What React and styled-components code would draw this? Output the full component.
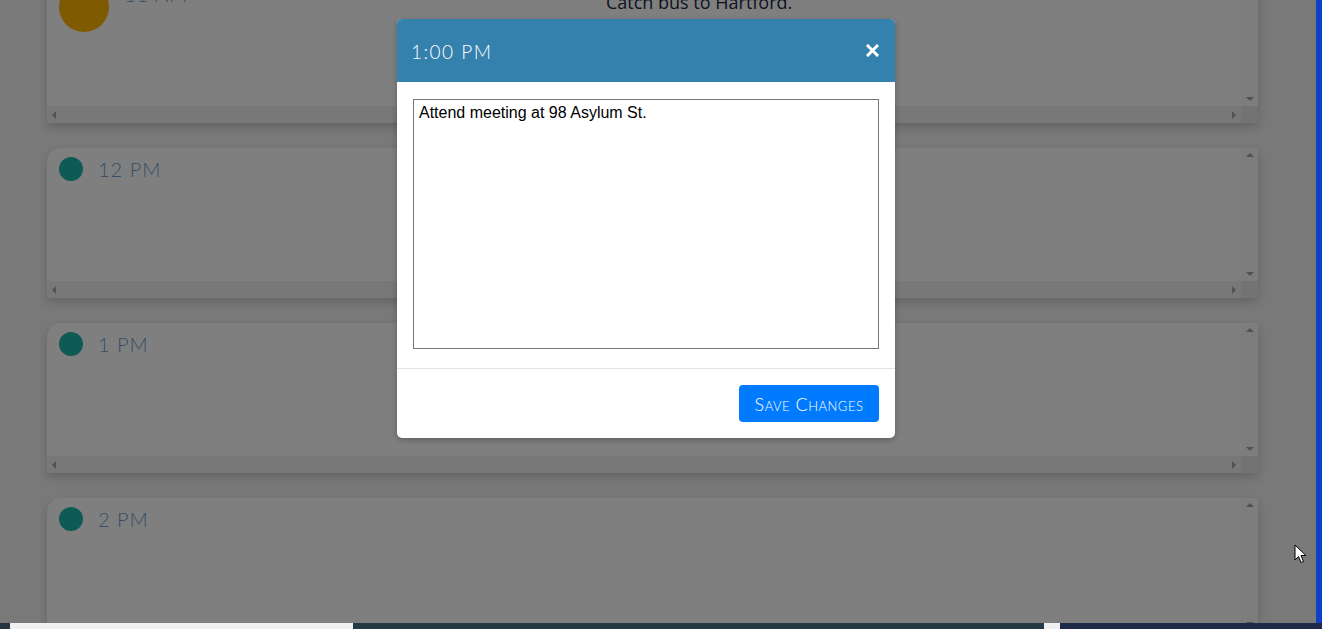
import React from 'react';
import styled, { createGlobalStyle } from 'styled-components';

const GlobalStyle = createGlobalStyle`
  html, body {
    margin: 0;
    padding: 0;
    overflow: hidden;
  }
  #root {
    width: 1322px;
    height: 629px;
  }
`;

const Screen = styled.div`
  width: 1322px;
  height: 629px;
  display: flex;
  flex-direction: column;
  overflow: hidden;
`;

const Row = styled.div`
  flex: 1;
  display: flex;
  min-height: 0;
`;

const Viewport = styled.div`
  flex: 1;
  position: relative;
  overflow: hidden;
  background: #f2f2f2;
`;

const BlueEdge = styled.div`
  width: 6px;
  background: #1040c8;
`;

const Taskbar = styled.div`
  height: 6px;
  display: flex;
  background: #26323f;
`;

const TaskPiece = styled.div`
  width: ${p => p.w}px;
  background: ${p => p.bg};
  flex: ${p => (p.grow ? 1 : 'none')};
`;

const List = styled.div`
  display: flex;
  flex-direction: column;
  gap: 25px;
  margin-top: -27px;
  padding-left: 47px;
`;

const Card = styled.div`
  width: 1211px;
  height: 150px;
  display: grid;
  grid-template-columns: 1fr 17px;
  grid-template-rows: 1fr 17px;
  background: #fff;
  border-top-left-radius: 14px;
  box-shadow: 0 4px 10px rgba(0, 0, 0, 0.18);
  font-family: Lato, "Open Sans", sans-serif;
`;

const Content = styled.div`
  display: flex;
  align-items: flex-start;
  padding: 9px 12px;
  gap: 15px;
`;

const Dot = styled.div`
  width: ${p => p.size}px;
  height: ${p => p.size}px;
  border-radius: 50%;
  background: ${p => p.color};
  flex: none;
`;

const Hour = styled.div`
  color: #6f9dc8;
  font-size: 20px;
  font-weight: 300;
  letter-spacing: 1px;
  line-height: 24px;
`;

const Note = styled.div`
  flex: 1;
  text-align: center;
  margin-top: ${p => p.top}px;
  color: #1c2a44;
  font-family: "Open Sans", sans-serif;
  font-size: 18px;
  font-weight: 400;
  padding-right: 34px;
`;

const VBar = styled.div`
  background: #fafafa;
  display: flex;
  flex-direction: column;
  justify-content: space-between;
  align-items: center;
  padding: 5px 0;
`;

const HBar = styled.div`
  background: #f1f1f1;
  display: flex;
  justify-content: space-between;
  align-items: center;
  padding: 0 5px;
`;

const Corner = styled.div`
  background: #e6e6e6;
`;

const Arrow = styled.span`
  width: 0;
  height: 0;
  border: 4px solid transparent;
  ${p => p.dir === 'up' && 'border-bottom-color: #a3a3a3; border-top-width: 0;'}
  ${p => p.dir === 'down' && 'border-top-color: #a3a3a3; border-bottom-width: 0;'}
  ${p => p.dir === 'left' && 'border-right-color: #a3a3a3; border-left-width: 0;'}
  ${p => p.dir === 'right' && 'border-left-color: #a3a3a3; border-right-width: 0;'}
`;

const Backdrop = styled.div`
  position: absolute;
  inset: 0;
  background: rgba(0, 0, 0, 0.5);
`;

const Modal = styled.div`
  position: absolute;
  top: 19px;
  left: 397px;
  width: 498px;
  background: #fff;
  border-radius: 5px;
  overflow: hidden;
  box-shadow: 0 2px 6px rgba(0, 0, 0, 0.25);
  font-family: Lato, "Open Sans", sans-serif;
`;

const Header = styled.div`
  height: 63px;
  background: #3581ae;
  display: flex;
  align-items: center;
  justify-content: space-between;
  padding: 0 16px 0 14px;
  color: #fff;
`;

const Title = styled.div`
  font-size: 19px;
  font-weight: 300;
  letter-spacing: 1.5px;
  padding-top: 2px;
`;

const Close = styled.button`
  border: none;
  background: none;
  color: #fff;
  padding: 0;
  display: flex;
  cursor: pointer;
`;

const Body = styled.div`
  padding: 17px 16px 19px;
  border-bottom: 1px solid #e4e4e4;
`;

const Area = styled.textarea`
  display: block;
  box-sizing: border-box;
  width: 466px;
  height: 250px;
  border: 1px solid #767676;
  padding: 4px 5px;
  resize: none;
  font-family: "Liberation Sans", Arial, sans-serif;
  font-size: 16px;
  color: #000;
  outline: none;
`;

const Footer = styled.div`
  display: flex;
  justify-content: flex-end;
  padding: 16px;
`;

const SaveButton = styled.button`
  width: 140px;
  height: 37px;
  border: none;
  border-radius: 4px;
  background: #007bff;
  color: #fff;
  font-family: Lato, "Open Sans", sans-serif;
  font-size: 18px;
  font-weight: 300;
  font-variant: small-caps;
  letter-spacing: 0.5px;
  cursor: pointer;
`;

const Pointer = styled.svg`
  position: absolute;
  left: 1294px;
  top: 544px;
`;

const slots = [
  { hour: '11 AM', color: '#ffb400', size: 50, note: 'Catch bus to Hartford.' },
  { hour: '12 PM', color: '#1cb5aa', size: 24 },
  { hour: '1 PM', color: '#1cb5aa', size: 24 },
  { hour: '2 PM', color: '#1cb5aa', size: 24 },
];

function Slot({ slot }) {
  return (
    <Card>
      <Content>
        <Dot size={slot.size} color={slot.color} />
        <Hour>{slot.hour}</Hour>
        {slot.note && <Note top={8}>{slot.note}</Note>}
      </Content>
      <VBar>
        <Arrow dir="up" />
        <Arrow dir="down" />
      </VBar>
      <HBar>
        <Arrow dir="left" />
        <Arrow dir="right" />
      </HBar>
      <Corner />
    </Card>
  );
}

export default function App() {
  return (
    <Screen>
      <GlobalStyle />
      <Row>
        <Viewport>
          <List>
            {slots.map(s => (
              <Slot key={s.hour} slot={s} />
            ))}
          </List>
          <Backdrop />
          <Modal>
            <Header>
              <Title>1:00 PM</Title>
              <Close aria-label="close">
                <svg width="13" height="13" viewBox="0 0 13 13">
                  <path d="M2 2 L11 11 M11 2 L2 11" stroke="#fff" strokeWidth="3" strokeLinecap="square" />
                </svg>
              </Close>
            </Header>
            <Body>
              <Area defaultValue="Attend meeting at 98 Asylum St." />
            </Body>
            <Footer>
              <SaveButton>Save Changes</SaveButton>
            </Footer>
          </Modal>
          <Pointer width="13" height="20" viewBox="0 0 13 20">
            <path d="M1 1 L1 16 L4.5 12.5 L7 18.5 L9.5 17.5 L7 11.5 L12 11.5 Z" fill="#fff" stroke="#000" strokeWidth="1" />
          </Pointer>
        </Viewport>
        <BlueEdge />
      </Row>
      <Taskbar>
        <TaskPiece w={10} bg="#26323f" />
        <TaskPiece w={343} bg="#f0f0f0" />
        <TaskPiece grow bg="#243a44" />
        <TaskPiece w={16} bg="#f0f0f0" />
        <TaskPiece w={262} bg="#1e2a4a" />
      </Taskbar>
    </Screen>
  );
}
